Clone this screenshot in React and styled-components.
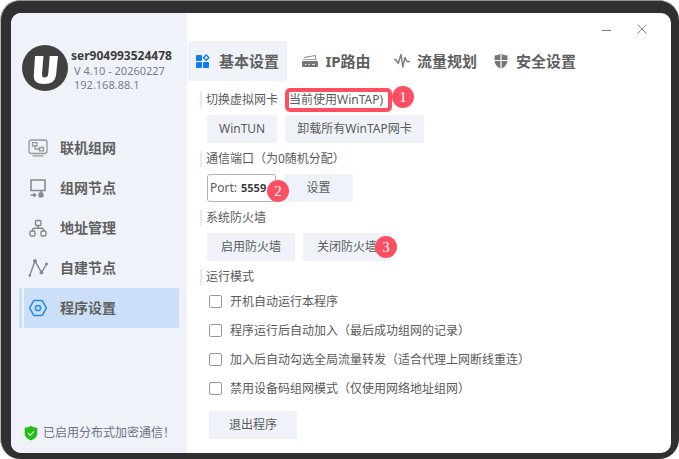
import { useState } from 'react'
import styled, { createGlobalStyle } from 'styled-components'

const navItems = [
  { id: "online", text: "联机组网", Icon: ScreenIcon },
  { id: "nodes", text: "组网节点", Icon: NodeIcon },
  { id: "address", text: "地址管理", Icon: AddressIcon },
  { id: "self", text: "自建节点", Icon: PathIcon },
  { id: "settings", text: "程序设置", Icon: HexIcon },
]

const tabs = [
  { id: "basic", text: "基本设置", Icon: BlocksIcon },
  { id: "route", text: "IP路由", Icon: RouterIcon },
  { id: "flow", text: "流量规划", Icon: PulseIcon },
  { id: "safe", text: "安全设置", Icon: ShieldIcon },
]

const modes = [
  "开机自动运行本程序",
  "程序运行后自动加入（最后成功组网的记录）",
  "加入后自动勾选全局流量转发（适合代理上网断线重连）",
  "禁用设备码组网模式（仅使用网络地址组网）",
]

const App = () => {
  const [navST, setNavST] = useState("settings")
  const [tabST, setTabST] = useState("basic")
  const [portST, setPortST] = useState("5559")

  return (
    <Frame>
      <GlobalStyle />
      <Window>
        <Sidebar>
          <Profile>
            <Logo />
            <div>
              <UserName>ser904993524478</UserName>
              <UserInfo>V 4.10 - 20260227</UserInfo>
              <UserInfo>192.168.88.1</UserInfo>
            </div>
          </Profile>
          <Nav>
            {navItems.map(({ id, text, Icon }) => (
              <NavRow key={id} $active={id === navST}>
                <NavBTN $active={id === navST} onClick={() => setNavST(id)}>
                  <Icon />
                  {text}
                </NavBTN>
              </NavRow>
            ))}
          </Nav>
          <Status>
            <StatusIcon />
            已启用分布式加密通信！
          </Status>
        </Sidebar>

        <Main>
          <TitleBar>
            <WindowBTN aria-label="minimize">
              <svg width="12" height="12" viewBox="0 0 12 12"><path d="M1 7.5h9" stroke="#777" /></svg>
            </WindowBTN>
            <WindowBTN aria-label="close">
              <svg width="12" height="12" viewBox="0 0 12 12"><path d="M1.500 1.500l9 9M10.500 1.500l-9 9" stroke="#888" /></svg>
            </WindowBTN>
          </TitleBar>
          <Tabs>
            {tabs.map(({ id, text, Icon }) => (
              <TabBTN key={id} $active={id === tabST} onClick={() => setTabST(id)}>
                <Icon />
                {text}
              </TabBTN>
            ))}
          </Tabs>

          <Content>
            <Section>
              <SectionTitle>
                切换虚拟网卡
                <Marked>当前使用WinTAP)<TopBadge>1</TopBadge></Marked>
              </SectionTitle>
              <Row>
                <BTN $pad={12}>WinTUN</BTN>
                <BTN $pad={12}>卸载所有WinTAP网卡</BTN>
              </Row>
            </Section>

            <Section>
              <SectionTitle>通信端口（为0随机分配）</SectionTitle>
              <Row>
                <PortBox>
                  Port:
                  <PortInput value={portST} onChange={e => setPortST(e.target.value)} />
                  <PortBadge>2</PortBadge>
                </PortBox>
                <WideBTN $pad={12}>设置</WideBTN>
              </Row>
            </Section>

            <Section>
              <SectionTitle>系统防火墙</SectionTitle>
              <Row>
                <BTN $pad={14}>启用防火墙</BTN>
                <BTN $pad={14}>关闭防火墙<SideBadge>3</SideBadge></BTN>
              </Row>
            </Section>

            <SectionTitle>运行模式</SectionTitle>
            <ModeList>
              {modes.map(text => (
                <ModeLabel key={text}>
                  <CheckBox type="checkbox" />
                  {text}
                </ModeLabel>
              ))}
              <ExitBTN $pad={20}>退出程序</ExitBTN>
            </ModeList>
          </Content>
        </Main>
      </Window>
    </Frame>
  )
}

function Logo() {
  return (
    <svg width="46" height="46" viewBox="0 0 46 46">
      <circle cx="23" cy="23" r="23" fill="#414141" />
      <path d="M13 11h8.500l-1.500 18q-.3 3.500 2.700 3.500T26.200 29L27.700 11h8.300l-2 19.500Q33 39 22 39T11.800 30z" fill="#fff" />
    </svg>
  )
}

function ScreenIcon() {
  return (
    <svg width="20" height="20" viewBox="0 0 20 20" fill="none" stroke="#97999b" strokeWidth="1.300">
      <rect x="1" y="2" width="18" height="13.500" rx="2.500" />
      <path d="M4.500 4.700h4.500v3.300h-4.500zM11.500 9.500h4v3.300h-4zM7 8v3h4.500M4.500 17.800h11" />
    </svg>
  )
}

function NodeIcon() {
  return (
    <svg width="20" height="20" viewBox="0 0 20 20" fill="none" stroke="#858789" strokeWidth="1.500">
      <path d="M3 2h14v10.500H3zM13 12.500v3M2.500 17h5" />
      <path d="M5.500 14.500L9 17l-3.500 2.500z" fill="#858789" stroke="none" />
      <rect x="10.500" y="14.500" width="5" height="5" rx="1.200" fill="#858789" stroke="none" />
    </svg>
  )
}

function AddressIcon() {
  return (
    <svg width="20" height="20" viewBox="0 0 20 20" fill="none" stroke="#858789" strokeWidth="1.400">
      <rect x="7.500" y="2.500" width="5.500" height="5" rx="1.200" />
      <rect x="2" y="13" width="5" height="5" rx="1.200" />
      <rect x="13" y="13" width="5" height="5" rx="1.200" />
      <path d="M10.200 7.500v2.700M4.500 13v-1q0-1.800 1.800-1.800h7.400q1.800 0 1.800 1.800v1" />
    </svg>
  )
}

function PathIcon() {
  return (
    <svg width="20" height="20" viewBox="0 0 20 20" fill="#858789" stroke="#858789">
      <path d="M1.700 17.500L7 3l6.500 11.500L18.500 6" fill="none" strokeWidth="1.400" />
      <circle cx="1.700" cy="17.500" r="1" />
      <circle cx="7" cy="3" r="1.500" />
      <circle cx="13.500" cy="14.500" r="1.500" />
      <circle cx="18.500" cy="6" r="1" />
    </svg>
  )
}

function HexIcon() {
  return (
    <svg width="20" height="20" viewBox="0 0 20 20" fill="none" stroke="#2387f8" strokeWidth="1.500">
      <path d="M6.500 2.500h7q.6 0 1 .6l3.600 6.200q.4.700 0 1.400l-3.600 6.200q-.4.600-1 .6h-7q-.6 0-1-.6l-3.600-6.200q-.4-.7 0-1.400l3.600-6.200q.4-.6 1-.6z" />
      <circle cx="10" cy="10" r="2.600" />
    </svg>
  )
}

function BlocksIcon() {
  return (
    <svg width="16" height="16" viewBox="0 0 16 16" fill="#0b7cf5">
      <rect x="0" y="2" width="6" height="6" rx="1" />
      <rect x="0" y="9" width="6" height="6" rx="1" />
      <rect x="7" y="9" width="6" height="6" rx="1" />
      <path d="M10.200 2l2.700 2.700-2.700 2.700-2.700-2.700z" fill="none" stroke="#0b7cf5" strokeWidth="1.300" />
    </svg>
  )
}

function RouterIcon() {
  return (
    <svg width="16" height="16" viewBox="0 0 16 16">
      <path d="M2 4.500L13.500 2.500V7" fill="none" stroke="#8a8a8a" />
      <path d="M1 6.500h13.500" stroke="#a5a5a5" />
      <rect x="0" y="8" width="16" height="6" rx="1" fill="#777" />
      <path d="M3 11.500h1.500M6.500 11.500h1.500M10 11.500h3" stroke="#e4e4e4" />
    </svg>
  )
}

function PulseIcon() {
  return (
    <svg width="16" height="16" viewBox="0 0 16 16" fill="none" stroke="#808080" strokeWidth="1.500" strokeLinejoin="round">
      <path d="M0 6.500l2 .5L4.200 10.500 7 1.500l1.800 12.500L11 4.500l1.800 4H16" />
    </svg>
  )
}

function ShieldIcon() {
  return (
    <svg width="16" height="16" viewBox="0 0 16 16">
      <path d="M8 .5q2.500 2 6.500 2v4.800Q14.500 13 8 15.800 1.500 13 1.500 7.300V2.500q4 0 6.500-2z" fill="#777" />
      <path d="M8 0v16M1 7.500h14" stroke="#fff" strokeWidth="1.200" />
    </svg>
  )
}

function StatusIcon() {
  return (
    <svg width="14" height="16" viewBox="0 0 14 16">
      <path d="M7 .8q2.600 1.900 6.300 2v5.700q0 4.500-6.300 6.900Q.7 13 .7 8.500V2.800q3.700-.1 6.300-2z" fill="#25bd18" />
      <path d="M4 8l2.200 2.200L10 6.300" fill="none" stroke="#c9f5c4" strokeWidth="1.200" />
    </svg>
  )
}

const GlobalStyle = createGlobalStyle`
  * {
    box-sizing: border-box;
  }

  body {
    margin: 0;
    background-color: #fff;
    color: #5a5a5a;
    font-family: "Noto Sans", "Noto Sans CJK SC", sans-serif;
    font-size: 12px;
    line-height: 16px;
  }

  button, input {
    font: inherit;
    color: inherit;
  }
`

const Frame = styled.div`
  display: flex;
  min-height: 100vh;
  padding: 12px 8px 6px 10px;
  background-color: #303030;
  border-top: 1px solid #8f9490;
  border-left: 1px solid #b5b7b7;
  border-radius: 20px;
`

const Window = styled.div`
  display: flex;
  flex: 1;
  overflow: hidden;
  background-color: #fff;
  border-radius: 10px;
`

const Sidebar = styled.aside`
  display: flex;
  flex-direction: column;
  width: 176px;
  padding: 32px 8px 12px;
  background-color: #eff3f9;
`

const Profile = styled.div`
  display: flex;
  gap: 3px;
  margin-left: 3px;
  white-space: nowrap;
`

const UserName = styled.div`
  margin-top: 3px;
  font-weight: bold;
  color: #3c3c3c;
`

const UserInfo = styled.div`
  padding-left: 3px;
  font-size: 11px;
  line-height: 14px;
  color: #777b8c;
`

const Nav = styled.nav`
  margin-top: 36px;
`

const NavRow = styled.div`
  padding-left: 2px;
  border-left: 3px solid ${p => p.$active ? "#cbdff5" : "transparent"};
`

const NavBTN = styled.button`
  display: flex;
  align-items: center;
  gap: 12px;
  width: 100%;
  height: 40px;
  padding: 0 4px;
  font-size: 14px;
  font-weight: bold;
  color: #606060;
  background-color: ${p => p.$active ? "#cbdff8" : "transparent"};
  border: none;
  border-radius: 2px;
  cursor: pointer;
`

const Status = styled.div`
  display: flex;
  align-items: center;
  gap: 5px;
  margin-top: auto;
  padding-left: 5px;
  white-space: nowrap;
  color: #6b7286;
`

const Main = styled.main`
  flex: 1;
  min-width: 0;
`

const TitleBar = styled.div`
  display: flex;
  justify-content: flex-end;
  align-items: flex-end;
  gap: 23px;
  height: 28px;
  padding: 0 23px 6px 0;
`

const WindowBTN = styled.button`
  display: flex;
  padding: 0;
  background: none;
  border: none;
  cursor: pointer;
`

const Tabs = styled.div`
  display: flex;
  padding-left: 1px;
`

const TabBTN = styled.button`
  display: flex;
  align-items: center;
  justify-content: center;
  gap: 7px;
  width: 99px;
  height: 40px;
  padding: 0;
  font-size: 15px;
  font-weight: bold;
  white-space: nowrap;
  color: #606060;
  background-color: ${p => p.$active ? "#eff3f9" : "transparent"};
  border: none;
  border-radius: 2px;
  cursor: pointer;
`

const Content = styled.div`
  padding: 11px 13px 14px;
`

const Section = styled.section`
  margin-bottom: 8px;
`

const SectionTitle = styled.div`
  display: flex;
  gap: 11px;
  padding-left: 4px;
  border-left: 2px solid #e6ebf2;
`

const Row = styled.div`
  display: flex;
  gap: 8px;
  margin-top: 7px;
  padding-left: 7px;
`

const BTN = styled.button`
  position: relative;
  height: 28px;
  padding: 0 ${p => p.$pad}px;
  background-color: #eff3f9;
  border: none;
  border-radius: 2px;
  cursor: pointer;
`

const WideBTN = styled(BTN)`
  min-width: 69px;
`

const ExitBTN = styled(BTN)`
  align-self: flex-start;
  margin-top: 8px;
`

const Badge = styled.span`
  position: absolute;
  z-index: 1;
  width: 22px;
  height: 22px;
  border-radius: 50%;
  background-color: #fd4f62;
  color: #fff;
  font-family: "Liberation Serif", serif;
  font-size: 15px;
  line-height: 22px;
  text-align: center;
`

const Marked = styled.span`
  position: relative;
  padding-right: 5px;
  outline: 4px solid #fd4f62;
  border-radius: 1px;
`

const TopBadge = styled(Badge)`
  top: -6px;
  right: -26px;
`

const PortBadge = styled(Badge)`
  top: 5px;
  right: -14px;
`

const SideBadge = styled(Badge)`
  top: 3px;
  right: -6px;
`

const PortBox = styled.label`
  position: relative;
  display: flex;
  align-items: center;
  gap: 4px;
  width: 69px;
  height: 28px;
  padding: 0 2px;
  border: 1px solid #b3b3b3;
  border-radius: 3px;
`

const PortInput = styled.input`
  flex: 1;
  min-width: 0;
  padding: 0;
  font-size: 11px;
  font-weight: bold;
  color: #3c3c3c;
  background: none;
  border: none;
  outline: none;
`

const ModeList = styled.div`
  display: flex;
  flex-direction: column;
  margin-top: 2px;
  padding-left: 9px;
`

const ModeLabel = styled.label`
  display: flex;
  align-items: center;
  gap: 8px;
  height: 29px;
`

const CheckBox = styled.input`
  appearance: none;
  width: 13px;
  height: 13px;
  margin: 0;
  background-color: #fff;
  border: 1px solid #999;
  border-radius: 2px;

  &:checked {
    background-color: #0b7cf5;
  }
`

export default App
